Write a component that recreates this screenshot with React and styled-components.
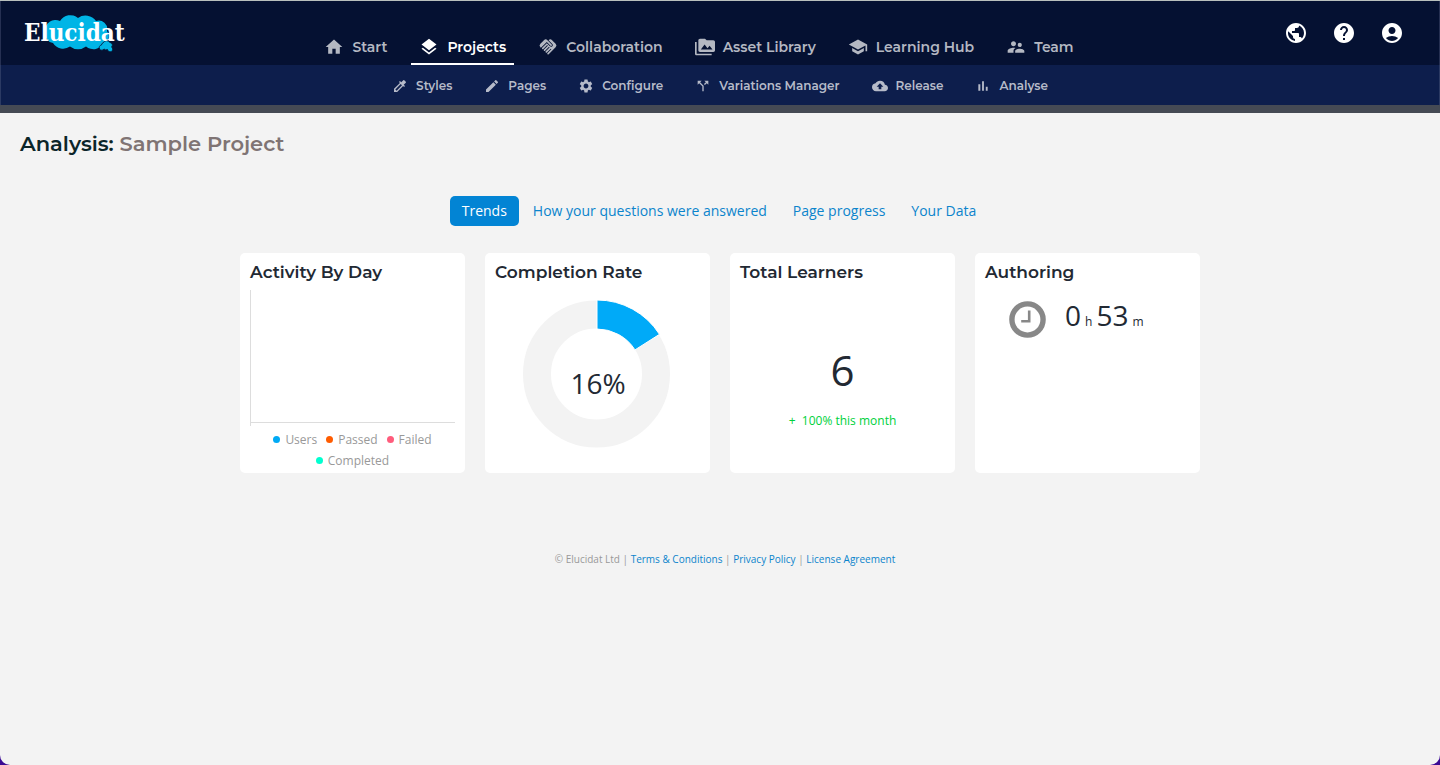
import React from "react";
import styled, { createGlobalStyle } from "styled-components";
import {
  MdAccountCircle,
  MdBackup,
  MdCallSplit,
  MdColorize,
  MdEdit,
  MdHandshake,
  MdHelp,
  MdHome,
  MdLayers,
  MdPermMedia,
  MdPublic,
  MdSchool,
  MdSettings,
  MdSupervisorAccount,
} from "react-icons/md";

const GlobalStyle = createGlobalStyle`
  * {
    box-sizing: border-box;
  }
  body {
    margin: 0;
    background: #3b0a93;
    font-family: "Open Sans", sans-serif;
  }
  h1,
  h2,
  p,
  ul {
    margin: 0;
    padding: 0;
  }
  a {
    text-decoration: none;
  }
`;

const headingFont = `Montserrat, Inter, sans-serif`;

const Page = styled.div`
  min-height: 100vh;
  background: #f3f3f3;
  border-top: 1px solid #b9c0bd;
  border-radius: 0 0 10px 10px;
`;

const Header = styled.header`
  border-bottom: 8px solid #454a54;
`;

const TopBar = styled.div`
  display: flex;
  align-items: center;
  justify-content: space-between;
  height: 64px;
  padding: 0 24px;
  background: #051132;
  box-shadow: inset 1px 0 #263052, inset -1px 0 #263052;
`;

const Logo = styled.a`
  display: flex;
  width: 102px;
`;

const MainNav = styled.nav`
  display: flex;
  align-self: flex-end;
  gap: 16px;
`;

const NavLink = styled.a`
  display: flex;
  align-items: center;
  gap: 8px;
  height: 34px;
  padding: 0 8px;
  border-bottom: 2px solid ${(props) => (props.$active ? "#fff" : "transparent")};
  color: ${(props) => (props.$active ? "#fff" : "#b4b8c2")};
  font: 600 14px/20px ${headingFont};

  svg {
    width: 20px;
    height: 20px;
  }
`;

const Actions = styled.div`
  display: flex;
`;

const ActionButton = styled.button`
  display: flex;
  padding: 12px;
  border: 0;
  background: none;
  color: #fff;

  svg {
    width: 24px;
    height: 24px;
  }
`;

const SubNav = styled.nav`
  display: flex;
  align-items: center;
  justify-content: center;
  gap: 32px;
  height: 40px;
  padding-top: 1px;
  background: #0d1e4c;
  box-shadow: inset 1px 0 #2b3a63, inset -1px 0 #2b3a63;
`;

const SubNavLink = styled.a`
  display: flex;
  align-items: center;
  gap: 8px;
  color: #b6bbc9;
  font: 600 12px/16px ${headingFont};

  svg {
    width: 16px;
    height: 16px;
  }
`;

const Title = styled.h1`
  padding: 16px 20px;
  color: #0b2529;
  font: 600 21px/30px ${headingFont};

  span {
    color: #7f7474;
  }
`;

const Tabs = styled.div`
  display: flex;
  justify-content: center;
  gap: 2px;
  padding: 21px 2px 27px 0;
`;

const Tab = styled.button`
  height: 30px;
  padding: 0 12px;
  border: 0;
  border-radius: 5px;
  background: ${(props) => (props.$active ? "#0284d4" : "none")};
  color: ${(props) => (props.$active ? "#fff" : "#0b84cc")};
  font: 14px/20px "Open Sans", sans-serif;
`;

const Cards = styled.main`
  display: grid;
  grid-template-columns: repeat(4, 1fr);
  gap: 20px;
  max-width: 960px;
  margin: 0 auto;
`;

const Card = styled.section`
  display: flex;
  flex-direction: column;
  min-height: 220px;
  padding: 8px 10px 0;
  border-radius: 5px;
  background: #fff;
  color: #222933;
`;

const CardTitle = styled.h2`
  font: 600 17px/22px ${headingFont};
`;

const Plot = styled.svg`
  display: block;
  width: 100%;
  height: 136px;
  margin-top: 7px;
`;

const Legend = styled.ul`
  display: flex;
  flex-wrap: wrap;
  justify-content: center;
  column-gap: 9px;
  margin-top: 3px;
  list-style: none;
`;

const LegendItem = styled.li`
  display: flex;
  align-items: center;
  gap: 5px;
  color: #999;
  font-size: 12px;
  line-height: 21px;

  &::before {
    content: "";
    width: 7px;
    height: 7px;
    border-radius: 50%;
    background: ${(props) => props.$color};
  }
`;

const Donut = styled.svg`
  display: block;
  width: 148px;
  height: 148px;
  margin: 17px 28px 0;

  text {
    fill: #222933;
    font: 28px "Open Sans", sans-serif;
  }
`;

const Total = styled.p`
  margin-top: 57px;
  font-size: 42px;
  line-height: 60px;
  text-align: center;
`;

const Change = styled.p`
  margin-top: 11px;
  color: #00d13b;
  font-size: 12px;
  line-height: 20px;
  text-align: center;
  white-space: pre;
`;

const Duration = styled.div`
  display: flex;
  gap: 19px;
  padding: 16px 24px 0;

  svg {
    flex: none;
    margin-top: 2px;
  }
`;

const Time = styled.p`
  display: flex;
  align-items: baseline;
  gap: 4px;
  font-size: 28px;
  line-height: 32px;

  small {
    font-size: 12px;
  }
`;

const Footer = styled.footer`
  padding: 77px 0 40px 10px;
  color: #999;
  font-size: 10px;
  line-height: 18px;
  text-align: center;

  a {
    color: #0b84cc;
  }
`;

const BarsIcon = () => (
  <svg viewBox="0 0 24 24" fill="currentColor">
    <path d="M5 9.2h3V19H5zM10.6 5h2.8v14h-2.8zm5.6 8H19v6h-2.8z" />
  </svg>
);

const mainLinks = [
  { label: "Start", icon: MdHome },
  { label: "Projects", icon: MdLayers, active: true },
  { label: "Collaboration", icon: MdHandshake },
  { label: "Asset Library", icon: MdPermMedia },
  { label: "Learning Hub", icon: MdSchool },
  { label: "Team", icon: MdSupervisorAccount },
];

const subLinks = [
  { label: "Styles", icon: MdColorize },
  { label: "Pages", icon: MdEdit },
  { label: "Configure", icon: MdSettings },
  { label: "Variations Manager", icon: MdCallSplit },
  { label: "Release", icon: MdBackup },
  { label: "Analyse", icon: BarsIcon },
];

const actions = [
  { label: "Language", icon: MdPublic },
  { label: "Help", icon: MdHelp },
  { label: "Account", icon: MdAccountCircle },
];

const tabs = [
  "Trends",
  "How your questions were answered",
  "Page progress",
  "Your Data",
];

const legend = [
  { label: "Users", color: "#00aaf5" },
  { label: "Passed", color: "#ff5c00" },
  { label: "Failed", color: "#ff5c7c" },
  { label: "Completed", color: "#00ffd0" },
];

const ElucidatLogo = () => (
  <svg width="102" height="38" viewBox="0 0 102 38" aria-hidden="true">
    <g fill="#00b5e6" transform="translate(0 1)">
      <path d="M21 16A10.5 10.5 0 0 1 36 6A12 12 0 0 1 54 3A13 13 0 0 1 72 6A8.5 8.5 0 0 1 83 16A8 8 0 0 1 80 28A12 12 0 0 1 62 31.5A13 13 0 0 1 46 31.5A12 12 0 0 1 29 28A10 10 0 0 1 21 16Z" />
      <path
        d="M79 28a4 4 0 0 1 7-.5a2.600 2.600 0 0 1 1.500 4.500a2.600 2.600 0 1 1-4 2.500a3 3 0 0 1-3.500-.5a2.600 2.600 0 1 1-2.500-4a2 2 0 0 1 1.500-2Z"
        stroke="#051132"
        strokeWidth="0.8"
      />
    </g>
    <text
      x="0"
      y="27"
      fill="#fff"
      fontFamily='"DejaVu Serif Condensed", "DejaVu Serif", serif'
      fontSize="24"
      fontWeight="700"
    >
      Elucidat
    </text>
  </svg>
);

// Point on a circle round the donut's centre, share runs clockwise from the top
const point = (share, radius) => {
  const angle = share * 2 * Math.PI;
  return `${74 + radius * Math.sin(angle)} ${74 - radius * Math.cos(angle)}`;
};

const CompletionDonut = ({ percent }) => {
  const share = percent / 100;
  return (
    <Donut viewBox="0 0 148 148" role="img" aria-label="Completion rate">
      <circle cx="73.5" cy="74" r="59.5" fill="none" stroke="#f3f3f3" strokeWidth="28" />
      <path
        d={`M${point(0, 74)} A74 74 0 0 1 ${point(share, 74)} L${point(
          share,
          45
        )} A45 45 0 0 0 ${point(0, 45)} Z`}
        fill="#00aaf8"
        stroke="#fff"
      />
      <text x="75" y="94" textAnchor="middle">
        {percent}%
      </text>
    </Donut>
  );
};

const Clock = () => (
  <svg width="37" height="37" viewBox="0 0 37 37" fill="none" stroke="#888">
    <circle cx="18.5" cy="18.5" r="15.6" strokeWidth="5.4" />
    <path d="M20.2 9.5v10.8h-8" strokeWidth="2.6" />
  </svg>
);

class App extends React.Component {
  render() {
    return (
      <Page>
        <GlobalStyle />
        <Header>
          <TopBar>
            <Logo href="#" aria-label="Elucidat">
              <ElucidatLogo />
            </Logo>
            <MainNav>
              {mainLinks.map(({ label, icon: Icon, active }) => (
                <NavLink href="#" key={label} $active={active}>
                  <Icon />
                  {label}
                </NavLink>
              ))}
            </MainNav>
            <Actions>
              {actions.map(({ label, icon: Icon }) => (
                <ActionButton key={label} aria-label={label}>
                  <Icon />
                </ActionButton>
              ))}
            </Actions>
          </TopBar>
          <SubNav>
            {subLinks.map(({ label, icon: Icon }) => (
              <SubNavLink href="#" key={label}>
                <Icon />
                {label}
              </SubNavLink>
            ))}
          </SubNav>
        </Header>
        <Title>
          Analysis: <span>Sample Project</span>
        </Title>
        <Tabs>
          {tabs.map((label) => (
            <Tab key={label} $active={label === "Trends"}>
              {label}
            </Tab>
          ))}
        </Tabs>
        <Cards>
          <Card>
            <CardTitle>Activity By Day</CardTitle>
            <Plot>
              <rect width="1" height="100%" fill="#ddd" />
              <rect y="132" width="100%" height="1" fill="#ddd" />
            </Plot>
            <Legend>
              {legend.map(({ label, color }) => (
                <LegendItem key={label} $color={color}>
                  {label}
                </LegendItem>
              ))}
            </Legend>
          </Card>
          <Card>
            <CardTitle>Completion Rate</CardTitle>
            <CompletionDonut percent={16} />
          </Card>
          <Card>
            <CardTitle>Total Learners</CardTitle>
            <Total>6</Total>
            <Change>{"+  100% this month"}</Change>
          </Card>
          <Card>
            <CardTitle>Authoring</CardTitle>
            <Duration>
              <Clock />
              <Time>
                0<small>h</small> 53<small>m</small>
              </Time>
            </Duration>
          </Card>
        </Cards>
        <Footer>
          © Elucidat Ltd | <a href="#">Terms &amp; Conditions</a> |{" "}
          <a href="#">Privacy Policy</a> | <a href="#">License Agreement</a>
        </Footer>
      </Page>
    );
  }
}

export default App;
